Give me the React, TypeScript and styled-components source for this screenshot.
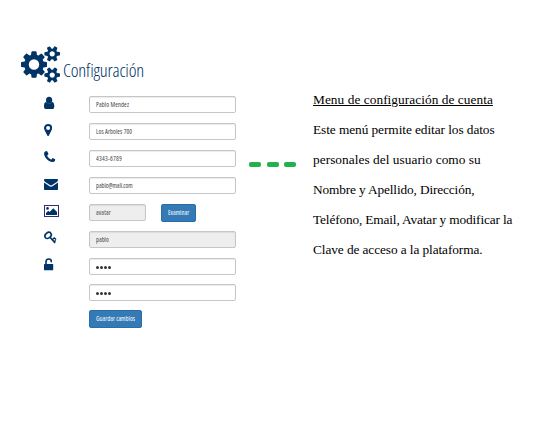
import React from "react";
import styled, { createGlobalStyle } from "styled-components";

const GlobalStyle = createGlobalStyle`
  body { margin: 0; background: #fff; }
  *, *::before, *::after { box-sizing: border-box; }
`;

const NAVY = "#003366";

const Page = styled.main`
  display: flex;
  width: 537px;
  height: 421px;
  padding: 46px 0 0 21px;
  overflow: hidden;
  background: #fff;
`;

const Panel = styled.section`
  width: 215px;
  flex: none;
`;

const Header = styled.header`
  display: flex;
  height: 50px;
  gap: 3px;
  svg { flex: none; }
`;

const Title = styled.h1`
  margin: 11px 0 0;
  font: 300 18.5px/25px "Open Sans", sans-serif;
  font-stretch: 75%;
  letter-spacing: -0.15px;
  color: ${NAVY};
  white-space: nowrap;
`;

const Row = styled.div<{ $height?: number }>`
  display: grid;
  grid-template-columns: 45px 147px;
  padding-left: 23px;
  height: ${(p) => p.$height ?? 27}px;
  align-items: start;
`;

const IconCell = styled.span`
  display: block;
  height: 18px;
  svg { display: block; overflow: visible; }
`;

const FieldGroup = styled.div`
  display: flex;
  gap: 15px;
`;

const Field = styled.input<{ $width?: number; $spacing?: number }>`
  display: block;
  width: ${(p) => p.$width ?? 147}px;
  height: 17px;
  padding: 0 6px;
  border: 1px solid #c6c6c6;
  border-radius: 2px;
  outline: 0;
  background: #fff;
  box-shadow: inset 0 1px 1px rgba(0, 0, 0, 0.08);
  color: #444;
  font: 400 6.5px/15px "Open Sans", sans-serif;
  font-stretch: 75%;
  letter-spacing: ${(p) => p.$spacing ?? 0}px;
  &:read-only { background: #eee; }
`;

const Secret = styled.div`
  display: flex;
  align-items: center;
  gap: 1px;
  width: 147px;
  height: 17px;
  padding: 1px 0 0 6px;
  border: 1px solid #c6c6c6;
  border-radius: 2px;
  box-shadow: inset 0 1px 1px rgba(0, 0, 0, 0.08);
`;

const Dot = styled.i`
  width: 3px;
  height: 3px;
  border-radius: 50%;
  background: #333;
`;

const Button = styled.button<{ $width: number }>`
  width: ${(p) => p.$width}px;
  height: 18px;
  padding: 0;
  border: 1px solid #2e6da4;
  border-radius: 2px;
  background: #337ab7;
  color: #fff;
  font: 400 6.5px/16px "Open Sans", sans-serif;
  font-stretch: 75%;
  letter-spacing: 0.04px;
  white-space: nowrap;
`;

const Connector = styled.div`
  display: flex;
  gap: 5.5px;
  margin: 116px 0 0 13px;
  width: 64px;
  flex: none;
`;

const Dash = styled.span`
  width: 12px;
  height: 5px;
  border-radius: 2px;
  background: #22b14c;
`;

const Notes = styled.article`
  padding-top: 39px;
  color: #000;
  font: 13.33px/30px "Liberation Serif", serif;
  white-space: nowrap;
`;

const Line = styled.p<{ $spacing?: number; $underline?: boolean }>`
  margin: 0;
  letter-spacing: ${(p) => p.$spacing ?? 0}px;
  text-decoration: ${(p) => (p.$underline ? "underline" : "none")};
`;

const smallCog =
  "v140q0 16-149 31-12 27-30 52 51 113 51 138 0 4-4 7-122 71-124 71-8 0-46-47t-52-68q-20 2-30 2t-30-2q-14 21-52 68t-46 47q-2 0-124-71-4-3-4-7 0-25 51-138-18-25-30-52-149-15-149-31v-140q0-16 149-31 13-29 30-52-51-113-51-138 0-4 4-7 4-2 35-20t59-34 30-16q8 0 46 46.500t52 67.500q20-2 30-2t30 2q51-71 92-112l6-2q4 0 124 70 4 3 4 7 0 25-51 138 17 23 30 52 149 15 149 31z";

const Cogs = () => (
  <svg width="39" height="37" viewBox="0 0 1920 1792" preserveAspectRatio="none" fill={NAVY}>
    <path
      d={
        "M896 896q0-106-75-181t-181-75-181 75-75 181 75 181 181 75 181-75 75-181zm768 512q0-52-38-90t-90-38-90 38-38 90q0 53 37.500 90.500t90.500 37.500 90.500-37.500 37.500-90.500zm0-1024q0-52-38-90t-90-38-90 38-38 90q0 53 37.500 90.500t90.500 37.500 90.500-37.500 37.500-90.500zm-384 421v185q0 10-7 19.500t-16 10.500l-155 24q-11 35-32 76 34 48 90 115 7 11 7 20 0 12-7 19-23 30-82.500 89.500t-78.500 59.500q-11 0-21-7l-115-90q-37 19-77 31-11 108-23 155-7 24-30 24h-186q-11 0-20-7.500t-10-17.500l-23-153q-34-10-75-31l-118 89q-7 7-20 7-11 0-21-8-144-133-144-160 0-9 7-19 10-14 41-53t47-61q-23-44-35-82l-152-24q-10-1-17-9.500t-7-19.500v-185q0-10 7-19.500t16-10.500l155-24q11-35 32-76-34-48-90-115-7-11-7-20 0-12 7-20 22-30 82-89t79-59q11 0 21 7l115 90q34-18 77-32 11-108 23-154 7-24 30-24h186q11 0 20 7.500t10 17.500l23 153q34 10 75 31l118-89q8-7 20-7 11 0 21 8 144 133 144 160 0 8-7 19-12 16-42 54t-45 60q23 48 34 82l152 23q10 2 17 10.500t7 19.500zm640 533" +
        smallCog +
        "m0-1024" +
        smallCog
      }
    />
  </svg>
);

const UserIcon = () => (
  <svg width="11" height="14" viewBox="0 0 11 14" fill={NAVY}>
    <ellipse cx="5.100" cy="4.200" rx="3.100" ry="3.500" />
    <path d="M2 6Q5.100 9 8.200 6C9.900 6.200 10.300 8.500 10.300 10.800Q10.300 13 8.600 13H1.700Q0 13 0 10.800C0 8.500.3 6.200 2 6z" />
  </svg>
);

const PinIcon = () => (
  <svg width="9" height="14" viewBox="0 0 9 14" fill={NAVY}>
    <path
      fillRule="evenodd"
      d="M4.100 1a4 4 0 0 1 4 4c0 .8-.2 1.400-.5 2L4.900 12.500q-.8 1.200-1.600 0L.5 7A4 4 0 0 1 4.100 1zm0 2.100a2 2 0 1 0 0 4 2 2 0 0 0 0-4z"
    />
  </svg>
);

const PhoneIcon = () => (
  <svg width="12" height="14" viewBox="0 0 12 14" fill={NAVY}>
    <path d="M2.700 1.100q.4-.1.700.6l1 2q.2.500-.2.900l-1 .9q-.1.300.2.700Q4.700 8.500 7 9.500q.4.100.6-.2L8.500 8.200q.300-.2.700 0l1.900 1.100q.3.200 0 1-.4 1.200-1.200 1.500-1.300.6-2.900 0C3.600 10.500 1.600 8.400.4 5.500Q-.3 3.500.4 2.200.8 1.400 2.700 1.100z" />
  </svg>
);

const MailIcon = () => (
  <svg width="14" height="14" viewBox="0 0 14 14" fill={NAVY}>
    <path d="M.7 2h12.600q.7 0 .7.8 0 1.200-.9 1.900L8.200 8.100Q7 8.900 5.800 8.100L.9 4.700Q0 4 0 2.800 0 2 .7 2z" />
    <path d="M0 5.500l5.200 3.600q1.800 1.100 3.600 0L14 5.500v6.700q0 .8-.8.8H.8Q0 13 0 12.200z" />
  </svg>
);

const ImageIcon = () => (
  <svg width="15" height="14" viewBox="0 0 15 14" fill={NAVY}>
    <rect x=".5" y="1.500" width="14" height="11" fill="#fff" stroke="#372a72" />
    <circle cx="3.500" cy="4.400" r="1.300" />
    <path d="M2 11V9l2.300-2.200L5.700 8 9.300 4.300 13 8v3z" />
  </svg>
);

const KeyIcon = () => (
  <svg width="13" height="14" viewBox="0 0 13 14" fill="none" stroke={NAVY}>
    <ellipse cx="4.100" cy="4.400" rx="3.500" ry="2.600" transform="rotate(-40 4.100 4.400)" strokeWidth="1.600" />
    <path d="M5.800 6l5.300 6" strokeWidth="1.600" />
    <path d="M8.200 8.700l2-1.800 1.900 1.600M10.100 10.800l1.600-1.400" strokeWidth="1.500" />
  </svg>
);

const UnlockIcon = () => (
  <svg width="10" height="14" viewBox="0 0 10 14">
    <path d="M2 6.500V3.800Q2 1 4.700 1T7.300 3.700" fill="none" stroke={NAVY} strokeWidth="1.600" strokeLinecap="round" />
    <rect y="6" width="9.200" height="6.300" rx=".5" fill={NAVY} />
  </svg>
);

const contact = [
  { icon: <UserIcon />, value: "Pablo Mendez", spacing: 0.1 },
  { icon: <PinIcon />, value: "Los Arboles 700", spacing: 0.08 },
  { icon: <PhoneIcon />, value: "4343-6789", spacing: 0.22 },
  { icon: <MailIcon />, value: "pablo@mail.com", spacing: -0.08 },
];

const PasswordField = () => (
  <Secret>
    <Dot /><Dot /><Dot /><Dot />
  </Secret>
);

export default function App() {
  return (
    <Page>
      <GlobalStyle />
      <Panel>
        <Header>
          <Cogs />
          <Title>Configuración</Title>
        </Header>
        {contact.map((c) => (
          <Row key={c.value}>
            <IconCell>{c.icon}</IconCell>
            <Field defaultValue={c.value} $spacing={c.spacing} />
          </Row>
        ))}
        <Row>
          <IconCell><ImageIcon /></IconCell>
          <FieldGroup>
            <Field readOnly value="avatar" $width={57} $spacing={0.15} />
            <Button $width={35}>Examinar</Button>
          </FieldGroup>
        </Row>
        <Row>
          <IconCell><KeyIcon /></IconCell>
          <Field readOnly value="pablo" />
        </Row>
        <Row $height={26}>
          <IconCell><UnlockIcon /></IconCell>
          <PasswordField />
        </Row>
        <Row $height={26}>
          <IconCell />
          <PasswordField />
        </Row>
        <Row>
          <IconCell />
          <Button $width={53}>Guardar cambios</Button>
        </Row>
      </Panel>
      <Connector>
        <Dash /><Dash /><Dash />
      </Connector>
      <Notes>
        <Line $underline $spacing={0.05}>Menu de configuración de cuenta</Line>
        <Line $spacing={-0.07}>Este menú permite editar los datos</Line>
        <Line $spacing={0.04}>personales del usuario como su</Line>
        <Line $spacing={-0.14}>Nombre y Apellido, Dirección,</Line>
        <Line $spacing={-0.15}>Teléfono, Email, Avatar y modificar la</Line>
        <Line $spacing={-0.09}>Clave de acceso a la plataforma.</Line>
      </Notes>
    </Page>
  );
}
